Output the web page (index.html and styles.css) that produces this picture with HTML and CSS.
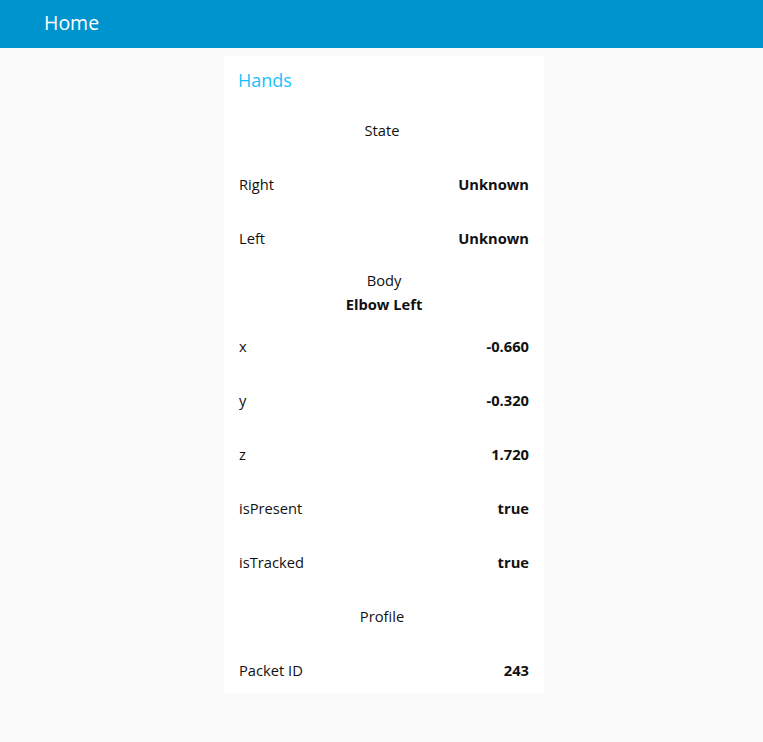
FILE: index.html
```html
<!DOCTYPE html>
<html>
<head>
<meta charset="utf-8">
<link rel="stylesheet" href="styles.css">
</head>
<body>
<header class="toolbar"><span class="toolbar-title">Home</span></header>
<main class="content">
  <section class="group">
    <div class="group-title">Hands</div>
    <div class="widgets">
      <div class="widget center single"><span class="label">State</span></div>
      <div class="widget row"><span class="label">Right</span><span class="value">Unknown</span></div>
      <div class="widget row"><span class="label">Left</span><span class="value">Unknown</span></div>
      <div class="widget center stack"><span class="label">Body</span><span class="value">Elbow Left</span></div>
      <div class="widget row"><span class="label">x</span><span class="value">-0.660</span></div>
      <div class="widget row"><span class="label">y</span><span class="value">-0.320</span></div>
      <div class="widget row"><span class="label">z</span><span class="value">1.720</span></div>
      <div class="widget row"><span class="label">isPresent</span><span class="value">true</span></div>
      <div class="widget row"><span class="label">isTracked</span><span class="value">true</span></div>
      <div class="widget center single"><span class="label">Profile</span></div>
      <div class="widget row"><span class="label">Packet ID</span><span class="value">243</span></div>
    </div>
  </section>
</main>
</body>
</html>
```
FILE: styles.css
```css
html, body {
  margin: 0;
  padding: 0;
}
body {
  background: #fafafa;
  font-family: "Open Sans", "Noto Sans", sans-serif;
  color: #111;
  width: 763px;
  height: 742px;
  overflow: hidden;
}
.toolbar {
  height: 48px;
  background: #0094ce;
  display: flex;
  align-items: center;
  padding-left: 44px;
  box-sizing: border-box;
}
.toolbar-title {
  color: #fff;
  font-size: 19.5px;
  line-height: 1;
  position: relative;
  top: -1px;
}
.content {
  display: flex;
  justify-content: flex-start;
  padding: 8px 0 0 224px;
}
.group {
  width: 320px;
  background: #fff;
}
.group-title {
  height: 50px;
  box-sizing: border-box;
  padding: 13px 0 0 14px;
  font-size: 18px;
  line-height: 22px;
  color: #1bbfff;
}
.widgets {
  display: flex;
  flex-direction: column;
  gap: 6px;
}
.widget {
  height: 48px;
  font-size: 14.7px;
  line-height: 20px;
  display: flex;
  align-items: center;
  padding: 0 15px;
}
.row {
  justify-content: space-between;
}
.center {
  justify-content: center;
}
.single {
  padding: 0 19px 0 15px;
}
.stack {
  flex-direction: column;
  justify-content: center;
  gap: 4px;
}
.value {
  font-weight: bold;
}
```
